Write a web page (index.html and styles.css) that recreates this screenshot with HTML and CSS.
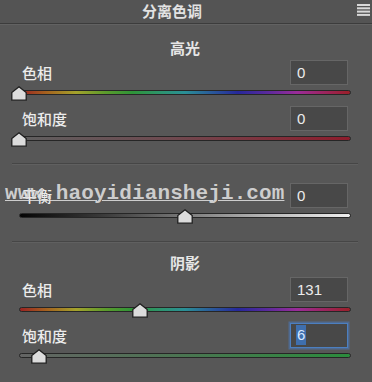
FILE: index.html
```html
<!DOCTYPE html>
<html lang="zh">
<head>
<meta charset="utf-8">
<title>分离色调</title>
<link rel="stylesheet" href="styles.css">
</head>
<body>
<div class="panel">
  <header class="hdr">
    <span class="title">分离色调</span>
    <span class="menu-area">
      <svg class="menu" width="13" height="12" viewBox="0 0 13 12">
        <rect x="0" y="0" width="13" height="2" fill="#d8d8d8"/>
        <rect x="0" y="3.3" width="13" height="2" fill="#d8d8d8"/>
        <rect x="0" y="6.6" width="13" height="2" fill="#d8d8d8"/>
        <rect x="0" y="9.9" width="13" height="2" fill="#d8d8d8"/>
      </svg>
    </span>
  </header>

  <div class="body">
    <div class="gtitle g1">高光</div>

    <div class="row r1"><span class="lbl">色相</span><div class="field">0</div></div>
    <div class="slider">
      <div class="track hue"></div>
      <svg class="thumb" style="left:0%" width="16" height="15" viewBox="0 0 16 15"><polygon points="8,0.8 15.2,6.5 15.2,14.2 0.8,14.2 0.8,6.5" fill="#dcdcdc" stroke="#1e1e1e" stroke-width="1.3"/></svg>
    </div>

    <div class="row r2"><span class="lbl">饱和度</span><div class="field">0</div></div>
    <div class="slider">
      <div class="track sat-red"></div>
      <svg class="thumb" style="left:0%" width="16" height="15" viewBox="0 0 16 15"><polygon points="8,0.8 15.2,6.5 15.2,14.2 0.8,14.2 0.8,6.5" fill="#dcdcdc" stroke="#1e1e1e" stroke-width="1.3"/></svg>
    </div>

    <div class="sep s1"></div>

    <div class="row r3"><span class="lbl">平衡</span><div class="field">0</div></div>
    <div class="slider">
      <div class="track bal"></div>
      <svg class="thumb" style="left:50%" width="16" height="15" viewBox="0 0 16 15"><polygon points="8,0.8 15.2,6.5 15.2,14.2 0.8,14.2 0.8,6.5" fill="#dcdcdc" stroke="#1e1e1e" stroke-width="1.3"/></svg>
    </div>

    <div class="sep s2"></div>

    <div class="gtitle g2">阴影</div>

    <div class="row r4"><span class="lbl">色相</span><div class="field">131</div></div>
    <div class="slider">
      <div class="track hue"></div>
      <svg class="thumb" style="left:36.4%" width="16" height="15" viewBox="0 0 16 15"><polygon points="8,0.8 15.2,6.5 15.2,14.2 0.8,14.2 0.8,6.5" fill="#dcdcdc" stroke="#1e1e1e" stroke-width="1.3"/></svg>
    </div>

    <div class="row r5"><span class="lbl">饱和度</span><div class="field focus"><span class="sel">6</span></div></div>
    <div class="slider">
      <div class="track sat-green"></div>
      <svg class="thumb" style="left:6%" width="16" height="15" viewBox="0 0 16 15"><polygon points="8,0.8 15.2,6.5 15.2,14.2 0.8,14.2 0.8,6.5" fill="#dcdcdc" stroke="#1e1e1e" stroke-width="1.3"/></svg>
    </div>
  </div>

  <div class="watermark">www.haoyidiansheji.com</div>
</div>
</body>
</html>
```

FILE: styles.css
```css
* { box-sizing: border-box; }

html, body {
  margin: 0;
  padding: 0;
}

body {
  width: 372px;
  height: 382px;
  background: #575757;
  overflow: hidden;
  font-family: "Noto Sans CJK SC", "Liberation Sans", sans-serif;
  color: #e4e4e4;
}

.panel {
  position: relative;
  width: 372px;
  height: 382px;
  background: #575757;
}

.hdr {
  display: flex;
  align-items: center;
  height: 24px;
  background: #545454;
  border-bottom: 1px solid #3c3c3c;
  box-shadow: 0 1px 0 #626262;
}

.title {
  flex: 1;
  text-align: center;
  font-size: 15px;
  font-weight: bold;
  line-height: 22px;
  color: #e2e2e2;
  margin-top: -1px;
}

.menu-area {
  width: 28px;
  display: flex;
  align-items: center;
  justify-content: flex-start;
  padding-left: 13px;
  margin-top: -3px;
}

.menu { display: block; }

.body {
  padding: 0 21px 0 19px;
}

.gtitle {
  height: 24px;
  line-height: 24px;
  text-align: center;
  font-size: 15px;
  font-weight: bold;
  color: #e6e6e6;
}

.g1 { margin-top: 12px; }
.g2 { margin-top: 8px; }

.row {
  display: flex;
  align-items: center;
  justify-content: space-between;
  height: 25px;
  padding: 0 3px 0 3px;
}

.r1 { margin-top: 0; }
.r2 { margin-top: 5px; }
.r3 { margin-top: 18px; }
.r4 { margin-top: 2px; }
.r5 { margin-top: 5px; }

.lbl {
  font-size: 15px;
  font-weight: 500;
  line-height: 25px;
  color: #ececec;
  margin-top: -1px;
}

.field {
  width: 58px;
  height: 25px;
  background: #484848;
  border: 1px solid #666666;
  font-family: "Liberation Sans", Arial, sans-serif;
  font-size: 15px;
  line-height: 23px;
  padding-left: 6px;
  color: #ececec;
}

.field.focus {
  border-color: #4c7fc0;
  box-shadow: 0 0 0 1.5px rgba(72, 122, 192, 0.55);
  padding-left: 5px;
}

.sel {
  display: inline-block;
  background: #3f6fae;
  color: #d7e8ff;
  line-height: 20px;
  padding: 0 1px;
  vertical-align: 1px;
}

.slider {
  position: relative;
  height: 16px;
}

.track {
  position: absolute;
  left: 0;
  right: 0;
  top: 5px;
  height: 5px;
  border: 1px solid #262626;
  border-radius: 3px;
}

.hue {
  background: linear-gradient(to right,
    #9a2323 0%,
    #a5621f 8%,
    #a4a22c 17%,
    #5b9b2c 26%,
    #2f9438 34%,
    #2d9470 43%,
    #2a8f96 50%,
    #2a5a9a 58%,
    #26289a 66%,
    #5a2a9c 75%,
    #9a2c98 84%,
    #9c2560 92%,
    #9a2028 100%);
}

.sat-red {
  background: linear-gradient(to right, #5f5f5f 0%, #6e4a50 45%, #8e1c2c 100%);
}

.sat-green {
  background: linear-gradient(to right, #646464 0%, #4d7353 45%, #2b8c3d 100%);
}

.bal {
  background: linear-gradient(to right, #050505 0%, #3a3a3a 25%, #7a7a7a 50%, #b8b8b8 75%, #eeeeee 100%);
}

.thumb {
  position: absolute;
  top: 1px;
  margin-left: -8px;
}

.sep {
  height: 2px;
  border-top: 1px solid #464646;
  border-bottom: 1px solid #606060;
  margin-left: -7px;
  margin-right: -7px;
}

.s1 { margin-top: 16px; }
.s2 { margin-top: 17px; }

.watermark {
  position: absolute;
  left: 5px;
  top: 183px;
  font-family: "Liberation Mono", "DejaVu Sans Mono", monospace;
  font-weight: bold;
  font-size: 21px;
  line-height: 22px;
  color: rgba(222, 222, 222, 0.88);
  text-decoration: underline;
  text-decoration-thickness: 1px;
  text-underline-offset: 1px;
  white-space: nowrap;
  letter-spacing: 0.1px;
}
```
